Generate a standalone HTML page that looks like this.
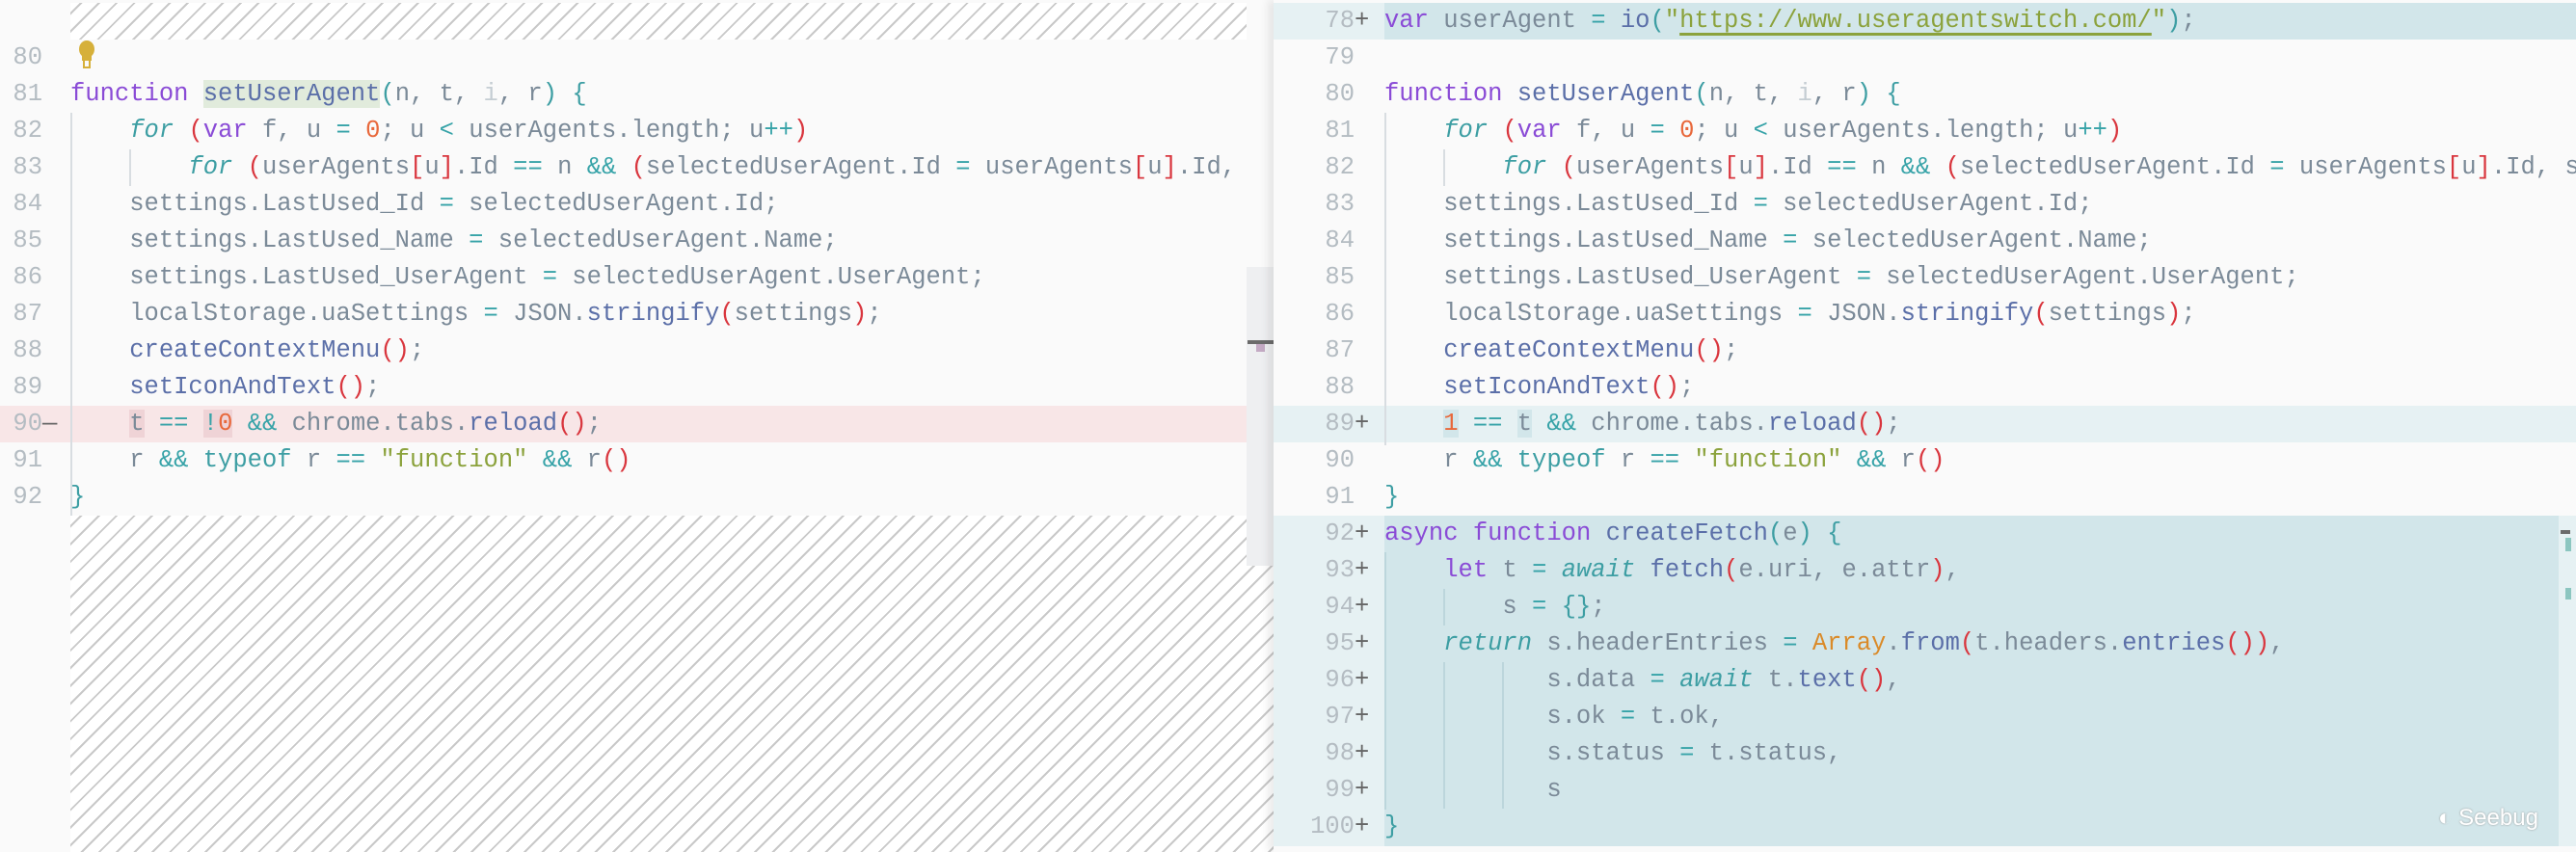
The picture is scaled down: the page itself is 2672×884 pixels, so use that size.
<!DOCTYPE html>
<html><head><meta charset="utf-8"><style>
*{margin:0;padding:0;box-sizing:border-box}
body{width:2672px;height:884px;overflow:hidden;background:#fafafa;position:relative;font-family:"Liberation Mono","DejaVu Sans Mono",monospace;font-size:25.5px;color:#7b8a98}
.hatch{position:absolute;background:repeating-linear-gradient(135deg,#fff 0 7px,#c9c9c9 7px 9px,#fff 9px 13px)}
.row{position:absolute;height:38px;line-height:38px;white-space:pre}
.ln{position:absolute;height:38px;line-height:38px;color:#b4bcc2;text-align:right;width:40px}
.plus{position:absolute;height:38px;line-height:38px;color:#666}
.k{color:#8a4bd6}.f{color:#5b6fa8}.it{color:#3d9ea3;font-style:italic}.p{color:#d9363e}.o{color:#37a3a8}.n{color:#e8683b}.s{color:#8ba23c}.a{color:#da8a28}.b{color:#3d9ea3}
.g{position:absolute;width:2px;background:#d8dde1}
</style></head><body>
<!-- LEFT PANE -->
<div class="hatch" style="left:73px;top:3px;width:1220px;height:38px"></div>
<div class="hatch" style="left:73px;top:535px;width:1248px;height:349px"></div>
<div style="position:absolute;left:0;top:421px;width:1321px;height:38px;background:#f8e6e7"></div>
<div style="position:absolute;left:1293px;top:277px;width:28px;height:310px;background:#eeeff1"></div>
<div style="position:absolute;left:1294px;top:353px;width:27px;height:4px;background:#6b6b6b"></div>
<div style="position:absolute;left:1303px;top:357px;width:9px;height:8px;background:#c4aac4"></div>
<svg style="position:absolute;left:78px;top:42px" width="24" height="30"><ellipse cx="12" cy="9" rx="8" ry="9" fill="#d6b03a"/><rect x="7" y="15" width="10" height="6" fill="#d6b03a"/><rect x="9" y="20" width="6" height="8" fill="none" stroke="#d6b03a" stroke-width="2"/></svg>
<div class="g" style="left:73px;top:117px;height:418px"></div>
<div class="g" style="left:134px;top:155px;height:38px"></div>

<div class="ln" style="left:4px;top:41px">80</div>
<div class="ln" style="left:4px;top:79px">81</div>
<div class="ln" style="left:4px;top:117px">82</div>
<div class="ln" style="left:4px;top:155px">83</div>
<div class="ln" style="left:4px;top:193px">84</div>
<div class="ln" style="left:4px;top:231px">85</div>
<div class="ln" style="left:4px;top:269px">86</div>
<div class="ln" style="left:4px;top:307px">87</div>
<div class="ln" style="left:4px;top:345px">88</div>
<div class="ln" style="left:4px;top:383px">89</div>
<div class="ln" style="left:4px;top:421px">90</div>
<div class="plus" style="left:44px;top:421px">—</div>
<div class="ln" style="left:4px;top:459px">91</div>
<div class="ln" style="left:4px;top:497px">92</div>

<div style="position:absolute;left:0;top:0;width:1293px;height:884px;overflow:hidden">
<div class="row" style="left:73px;top:79px"><span class="k">function</span> <span class="f" style="background:#e1ebdc">setUserAgent</span><span class="b">(</span>n, t, <span style="color:#c5cdd3">i</span>, r<span class="b">)</span> <span class="b">{</span></div>
<div class="row" style="left:73px;top:117px">    <span class="it">for</span> <span class="p">(</span><span class="k">var</span> f, u <span class="o">=</span> <span class="n">0</span>; u <span class="o">&lt;</span> userAgents.length; u<span class="o">++</span><span class="p">)</span></div>
<div class="row" style="left:73px;top:155px">        <span class="it">for</span> <span class="p">(</span>userAgents<span class="p">[</span>u<span class="p">]</span>.Id <span class="o">==</span> n <span class="o">&amp;&amp;</span> <span class="p">(</span>selectedUserAgent.Id <span class="o">=</span> userAgents<span class="p">[</span>u<span class="p">]</span>.Id, s</div>
<div class="row" style="left:73px;top:193px">    settings.LastUsed_Id <span class="o">=</span> selectedUserAgent.Id;</div>
<div class="row" style="left:73px;top:231px">    settings.LastUsed_Name <span class="o">=</span> selectedUserAgent.Name;</div>
<div class="row" style="left:73px;top:269px">    settings.LastUsed_UserAgent <span class="o">=</span> selectedUserAgent.UserAgent;</div>
<div class="row" style="left:73px;top:307px">    localStorage.uaSettings <span class="o">=</span> JSON.<span class="f">stringify</span><span class="p">(</span>settings<span class="p">)</span>;</div>
<div class="row" style="left:73px;top:345px">    <span class="f">createContextMenu</span><span class="p">()</span>;</div>
<div class="row" style="left:73px;top:383px">    <span class="f">setIconAndText</span><span class="p">()</span>;</div>
<div class="row" style="left:73px;top:421px">    <span style="background:#efd3d6">t</span> <span class="o">==</span> <span style="background:#efd3d6"><span class="o">!</span><span class="n">0</span></span> <span class="o">&amp;&amp;</span> chrome.tabs.<span class="f">reload</span><span class="p">()</span>;</div>
<div class="row" style="left:73px;top:459px">    r <span class="o">&amp;&amp;</span> <span class="b">typeof</span> r <span class="o">==</span> <span class="s">"function"</span> <span class="o">&amp;&amp;</span> r<span class="p">()</span></div>
<div class="row" style="left:73px;top:497px"><span class="b">}</span></div>
</div>

<!-- RIGHT PANE -->
<div style="position:absolute;left:1321px;top:0;width:1351px;height:884px;background:#fafafa;box-shadow:-6px 0 8px rgba(0,0,0,0.08);overflow:hidden">
<div style="position:absolute;left:0;top:3px;width:1351px;height:38px;background:#e6f1f3"></div>
<div style="position:absolute;left:115px;top:3px;width:1236px;height:38px;background:#d2e6ea"></div>
<div style="position:absolute;left:0;top:421px;width:1351px;height:38px;background:#e6f1f3"></div>
<div style="position:absolute;left:0;top:535px;width:1351px;height:343px;background:#e6f1f3"></div>
<div style="position:absolute;left:115px;top:535px;width:1218px;height:343px;background:#d2e6ea"></div>
<div style="position:absolute;left:1335px;top:550px;width:10px;height:4px;background:#6b6b6b"></div>
<div style="position:absolute;left:1340px;top:558px;width:6px;height:14px;background:#8cc6c0"></div>
<div style="position:absolute;left:1340px;top:610px;width:6px;height:12px;background:#8cc6c0"></div>
<div class="g" style="left:115px;top:117px;height:345px"></div>
<div class="g" style="left:176px;top:155px;height:38px"></div>
<div class="g" style="left:115px;top:573px;height:267px;background:#bcd6dc"></div>
<div class="g" style="left:176px;top:611px;height:38px;background:#bcd6dc"></div>
<div class="g" style="left:176px;top:687px;height:152px;background:#bcd6dc"></div>
<div class="g" style="left:237px;top:687px;height:152px;background:#bcd6dc"></div>

<div class="ln" style="left:44px;top:3px">78</div><div class="plus" style="left:84px;top:3px">+</div>
<div class="ln" style="left:44px;top:41px">79</div>
<div class="ln" style="left:44px;top:79px">80</div>
<div class="ln" style="left:44px;top:117px">81</div>
<div class="ln" style="left:44px;top:155px">82</div>
<div class="ln" style="left:44px;top:193px">83</div>
<div class="ln" style="left:44px;top:231px">84</div>
<div class="ln" style="left:44px;top:269px">85</div>
<div class="ln" style="left:44px;top:307px">86</div>
<div class="ln" style="left:44px;top:345px">87</div>
<div class="ln" style="left:44px;top:383px">88</div>
<div class="ln" style="left:44px;top:421px">89</div><div class="plus" style="left:84px;top:421px">+</div>
<div class="ln" style="left:44px;top:459px">90</div>
<div class="ln" style="left:44px;top:497px">91</div>
<div class="ln" style="left:44px;top:535px">92</div><div class="plus" style="left:84px;top:535px">+</div>
<div class="ln" style="left:44px;top:573px">93</div><div class="plus" style="left:84px;top:573px">+</div>
<div class="ln" style="left:44px;top:611px">94</div><div class="plus" style="left:84px;top:611px">+</div>
<div class="ln" style="left:44px;top:649px">95</div><div class="plus" style="left:84px;top:649px">+</div>
<div class="ln" style="left:44px;top:687px">96</div><div class="plus" style="left:84px;top:687px">+</div>
<div class="ln" style="left:44px;top:725px">97</div><div class="plus" style="left:84px;top:725px">+</div>
<div class="ln" style="left:44px;top:763px">98</div><div class="plus" style="left:84px;top:763px">+</div>
<div class="ln" style="left:44px;top:801px">99</div><div class="plus" style="left:84px;top:801px">+</div>
<div class="ln" style="left:28px;top:839px;width:56px">100</div><div class="plus" style="left:84px;top:839px">+</div>

<div class="row" style="left:115px;top:3px"><span class="k">var</span> userAgent <span class="o">=</span> <span class="f">io</span><span class="b">(</span><span class="s">"<span style="text-decoration:underline;text-decoration-color:#8ba23c;text-underline-offset:6px;text-decoration-thickness:3px">https://www.useragentswitch.com/</span>"</span><span class="b">)</span>;</div>
<div class="row" style="left:115px;top:79px"><span class="k">function</span> <span class="f">setUserAgent</span><span class="b">(</span>n, t, <span style="color:#c5cdd3">i</span>, r<span class="b">)</span> <span class="b">{</span></div>
<div class="row" style="left:115px;top:117px">    <span class="it">for</span> <span class="p">(</span><span class="k">var</span> f, u <span class="o">=</span> <span class="n">0</span>; u <span class="o">&lt;</span> userAgents.length; u<span class="o">++</span><span class="p">)</span></div>
<div class="row" style="left:115px;top:155px">        <span class="it">for</span> <span class="p">(</span>userAgents<span class="p">[</span>u<span class="p">]</span>.Id <span class="o">==</span> n <span class="o">&amp;&amp;</span> <span class="p">(</span>selectedUserAgent.Id <span class="o">=</span> userAgents<span class="p">[</span>u<span class="p">]</span>.Id, s</div>
<div class="row" style="left:115px;top:193px">    settings.LastUsed_Id <span class="o">=</span> selectedUserAgent.Id;</div>
<div class="row" style="left:115px;top:231px">    settings.LastUsed_Name <span class="o">=</span> selectedUserAgent.Name;</div>
<div class="row" style="left:115px;top:269px">    settings.LastUsed_UserAgent <span class="o">=</span> selectedUserAgent.UserAgent;</div>
<div class="row" style="left:115px;top:307px">    localStorage.uaSettings <span class="o">=</span> JSON.<span class="f">stringify</span><span class="p">(</span>settings<span class="p">)</span>;</div>
<div class="row" style="left:115px;top:345px">    <span class="f">createContextMenu</span><span class="p">()</span>;</div>
<div class="row" style="left:115px;top:383px">    <span class="f">setIconAndText</span><span class="p">()</span>;</div>
<div class="row" style="left:115px;top:421px">    <span class="n" style="background:#d2e6ea">1</span> <span class="o">==</span> <span style="background:#d2e6ea">t</span> <span class="o">&amp;&amp;</span> chrome.tabs.<span class="f">reload</span><span class="p">()</span>;</div>
<div class="row" style="left:115px;top:459px">    r <span class="o">&amp;&amp;</span> <span class="b">typeof</span> r <span class="o">==</span> <span class="s">"function"</span> <span class="o">&amp;&amp;</span> r<span class="p">()</span></div>
<div class="row" style="left:115px;top:497px"><span class="b">}</span></div>
<div class="row" style="left:115px;top:535px"><span class="k">async</span> <span class="k">function</span> <span class="f">createFetch</span><span class="b">(</span>e<span class="b">)</span> <span class="b">{</span></div>
<div class="row" style="left:115px;top:573px">    <span class="k">let</span> t <span class="o">=</span> <span class="it">await</span> <span class="f">fetch</span><span class="p">(</span>e.uri, e.attr<span class="p">)</span>,</div>
<div class="row" style="left:115px;top:611px">        s <span class="o">=</span> <span class="b">{}</span>;</div>
<div class="row" style="left:115px;top:649px">    <span class="it">return</span> s.headerEntries <span class="o">=</span> <span class="a">Array</span>.<span class="f">from</span><span class="p">(</span>t.headers.<span class="f">entries</span><span class="p">())</span>,</div>
<div class="row" style="left:115px;top:687px">           s.data <span class="o">=</span> <span class="it">await</span> t.<span class="f">text</span><span class="p">()</span>,</div>
<div class="row" style="left:115px;top:725px">           s.ok <span class="o">=</span> t.ok,</div>
<div class="row" style="left:115px;top:763px">           s.status <span class="o">=</span> t.status,</div>
<div class="row" style="left:115px;top:801px">           s</div>
<div class="row" style="left:115px;top:839px"><span class="b">}</span></div>
<div style="position:absolute;left:1208px;top:835px;font-family:'Liberation Sans',sans-serif;font-size:24px;color:#fff;text-shadow:0 0 2px #999">◐ Seebug</div>
</div>
</body></html>
